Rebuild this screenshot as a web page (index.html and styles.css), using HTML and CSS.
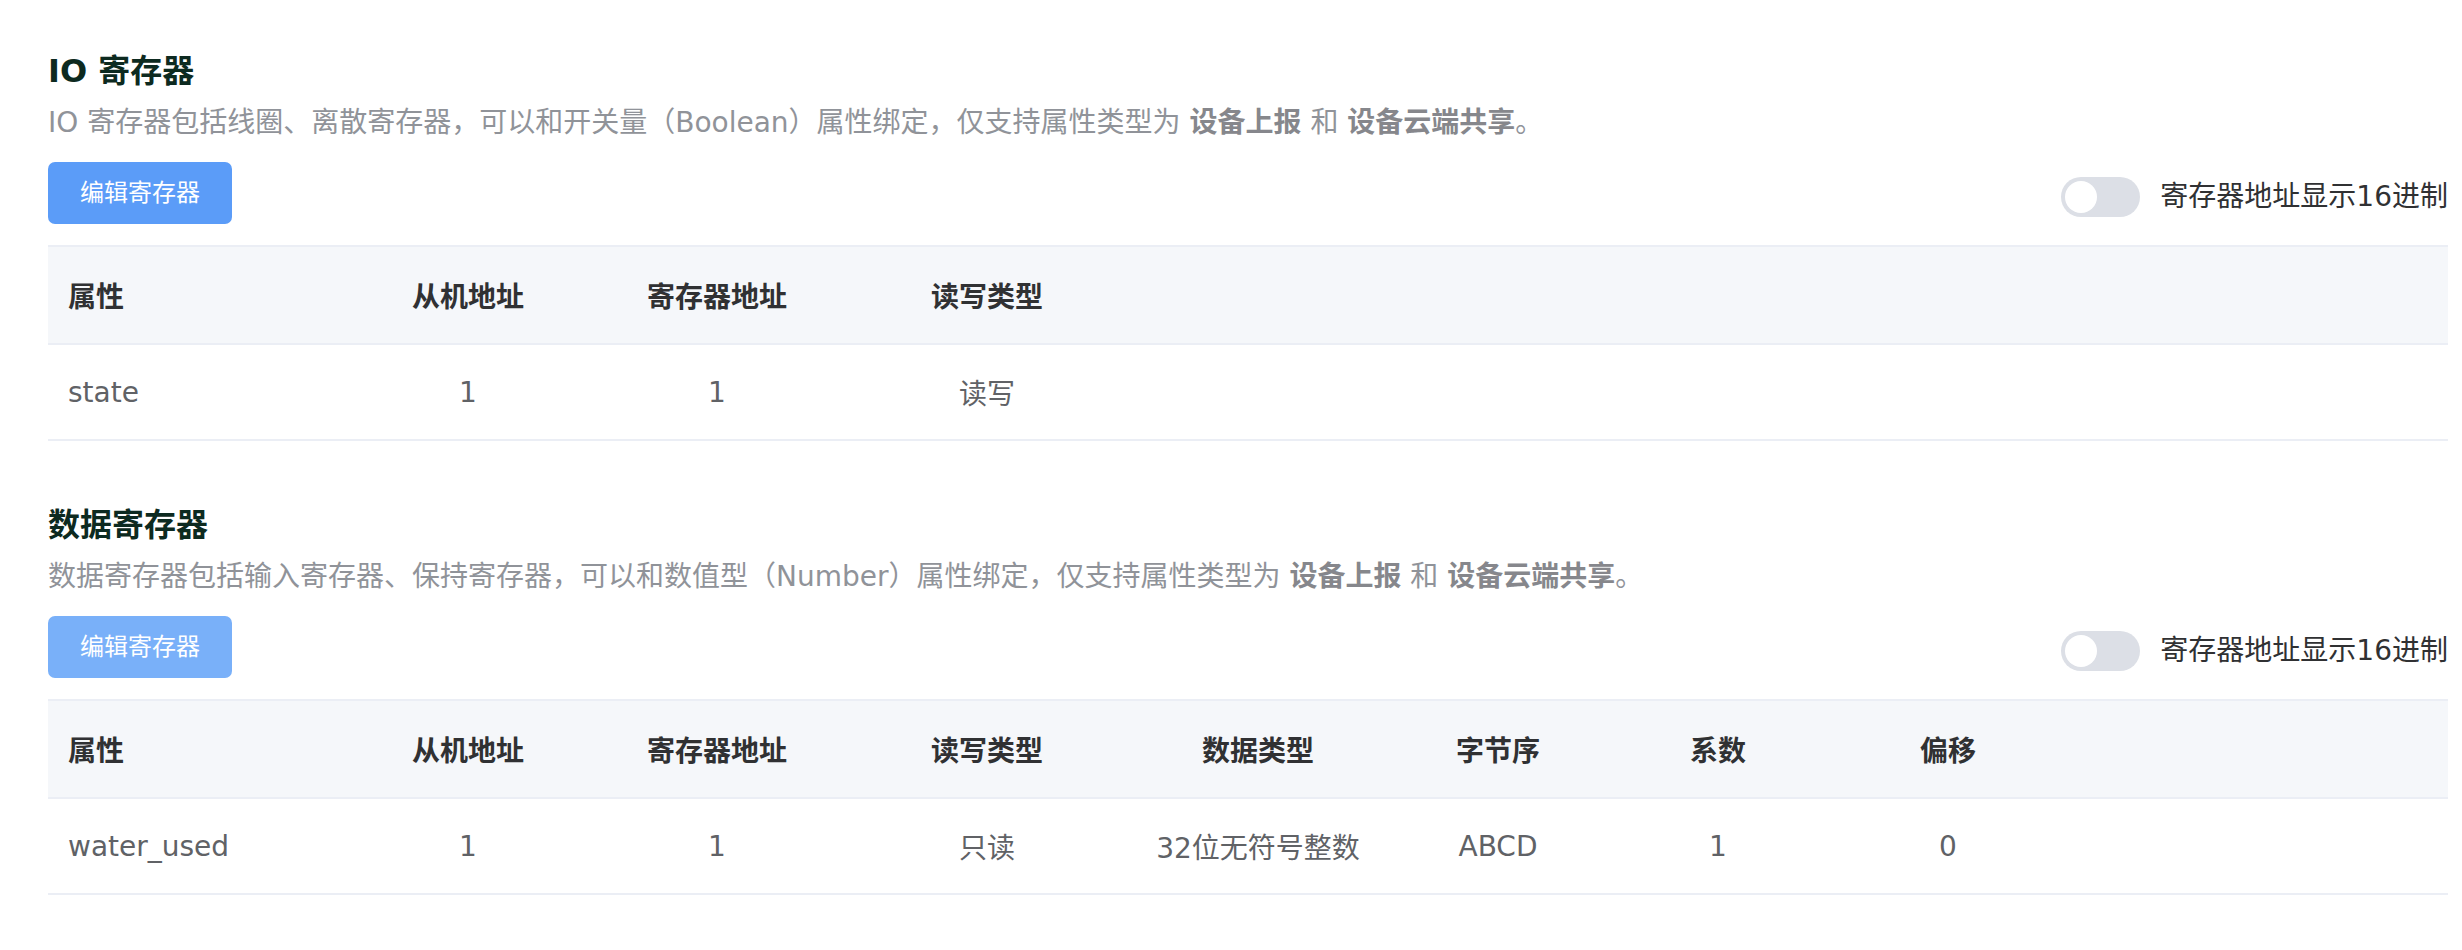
FILE: index.html
```html
<!DOCTYPE html>
<html lang="zh-CN">
<head>
<meta charset="utf-8">
<title>寄存器</title>
<link rel="stylesheet" href="styles.css">
</head>
<body>
<div class="page">
  <section class="block">
    <h2 class="title">IO 寄存器</h2>
    <p class="desc">IO 寄存器包括线圈、离散寄存器，可以和开关量（Boolean）属性绑定，仅支持属性类型为 <b>设备上报</b> 和 <b>设备云端共享</b>。</p>
    <div class="toolbar">
      <button class="btn">编辑寄存器</button>
      <div class="switch-wrap">
        <span class="switch"><span class="knob"></span></span>
        <span class="switch-label">寄存器地址显示16进制</span>
      </div>
    </div>
    <table class="grid">
      <colgroup>
        <col class="c-attr"><col class="c-slave"><col class="c-reg"><col class="c-rw"><col>
      </colgroup>
      <thead>
        <tr><th class="left">属性</th><th>从机地址</th><th>寄存器地址</th><th>读写类型</th><th></th></tr>
      </thead>
      <tbody>
        <tr><td class="left">state</td><td>1</td><td>1</td><td>读写</td><td></td></tr>
      </tbody>
    </table>
  </section>

  <section class="block block-second">
    <h2 class="title">数据寄存器</h2>
    <p class="desc">数据寄存器包括输入寄存器、保持寄存器，可以和数值型（Number）属性绑定，仅支持属性类型为 <b>设备上报</b> 和 <b>设备云端共享</b>。</p>
    <div class="toolbar">
      <button class="btn btn-light">编辑寄存器</button>
      <div class="switch-wrap">
        <span class="switch"><span class="knob"></span></span>
        <span class="switch-label">寄存器地址显示16进制</span>
      </div>
    </div>
    <table class="grid">
      <colgroup>
        <col class="c-attr"><col class="c-slave"><col class="c-reg"><col class="c-rw"><col class="c-dtype"><col class="c-order"><col class="c-coef"><col class="c-offset"><col>
      </colgroup>
      <thead>
        <tr><th class="left">属性</th><th>从机地址</th><th>寄存器地址</th><th>读写类型</th><th>数据类型</th><th>字节序</th><th>系数</th><th>偏移</th><th></th></tr>
      </thead>
      <tbody>
        <tr><td class="left">water_used</td><td>1</td><td>1</td><td>只读</td><td>32位无符号整数</td><td>ABCD</td><td>1</td><td>0</td><td></td></tr>
      </tbody>
    </table>
  </section>
</div>
</body>
</html>
```

FILE: styles.css
```css
* { box-sizing: border-box; }

html, body {
  margin: 0;
  padding: 0;
  background: #ffffff;
}

body {
  font-family: "DejaVu Sans", "Noto Sans CJK SC", sans-serif;
  color: #303133;
}

.page {
  padding: 49px 14px 0 48px;
}

.block-second {
  margin-top: 62px;
}

.title {
  margin: 0;
  font-size: 32px;
  line-height: 44px;
  font-weight: 700;
  color: #0d2a20;
}

.desc {
  margin: 10px 0 0;
  font-size: 28px;
  line-height: 40px;
  color: #909399;
}

.desc b {
  font-weight: 700;
  color: #86878c;
}

.toolbar {
  margin-top: 19px;
  height: 62px;
  display: flex;
  align-items: center;
  justify-content: space-between;
}

.btn {
  height: 62px;
  padding: 0 32px;
  border: none;
  border-radius: 7px;
  background: #5b9cf8;
  color: #ffffff;
  font-family: "DejaVu Sans", "Noto Sans CJK SC", sans-serif;
  font-size: 24px;
  line-height: 62px;
}

.btn-light {
  background: #79b0f9;
}

.switch-wrap {
  display: flex;
  align-items: center;
  gap: 20px;
  margin-top: 7px;
}

.switch {
  width: 79px;
  height: 40px;
  border-radius: 20px;
  background: #dcdfe6;
  display: flex;
  align-items: center;
  padding: 0 4px;
}

.knob {
  width: 32px;
  height: 32px;
  border-radius: 50%;
  background: #ffffff;
}

.switch-label {
  font-size: 28px;
  line-height: 40px;
  color: #303133;
}

.grid {
  margin-top: 21px;
  width: 100%;
  table-layout: fixed;
  border-collapse: separate;
  border-spacing: 0;
  border-top: 2px solid #ebeef5;
  font-size: 28px;
}

.c-attr { width: 320px; }
.c-slave { width: 200px; }
.c-reg { width: 298px; }
.c-rw { width: 242px; }
.c-dtype { width: 300px; }
.c-order { width: 180px; }
.c-coef { width: 260px; }
.c-offset { width: 200px; }

.grid th,
.grid td {
  padding: 0 20px;
  text-align: center;
  vertical-align: middle;
  border-bottom: 2px solid #ebeef5;
  white-space: nowrap;
}

.grid th {
  height: 98px;
  background: #f5f7fa;
  font-weight: 700;
  color: #303133;
}

.grid td {
  height: 96px;
  color: #606266;
}

.grid .left {
  text-align: left;
}
```
